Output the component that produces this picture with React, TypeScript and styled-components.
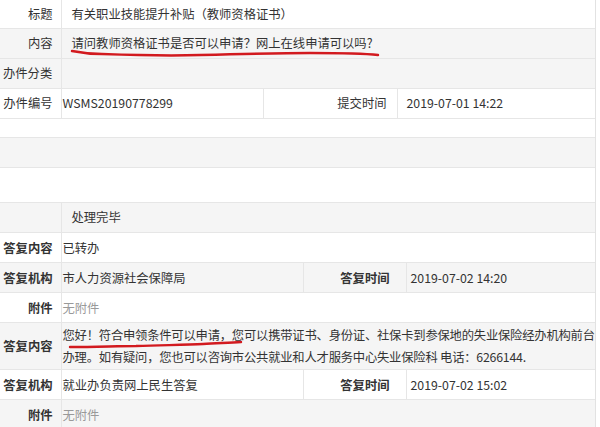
import React from 'react'
import styled, { createGlobalStyle } from 'styled-components'

const GlobalStyle = createGlobalStyle`
  html, body {
    margin: 0;
    padding: 0;
    background: #fff;
  }
  body {
    font-family: "Noto Sans CJK SC", "Liberation Sans", sans-serif;
    font-size: 12.3px;
    color: #333;
  }
`

function App() {
  return (
    <>
      <GlobalStyle />
      <Page>
        <InfoTable>
          <colgroup>
            <col style={{ width: 61 }} />
            <col style={{ width: 202 }} />
            <col style={{ width: 134 }} />
            <col />
          </colgroup>
          <tbody>
            <Row $h={28}>
              <Label>标题</Label>
              <Value colSpan={3} $pad={10}>有关职业技能提升补贴（教师资格证书）</Value>
            </Row>
            <Row $gray>
              <Label>内容</Label>
              <Value colSpan={3} $pad={10}>
                <Marked>
                  请问教师资格证书是否可以申请？网上在线申请可以吗?
                  <Scribble width={312} height={10} viewBox="0 0 312 10">
                    <path d="M2 2 C 12 4, 22 5, 32 5 C 60 6, 100 7, 130 6 C 170 5, 210 4, 240 4 C 270 4, 290 4, 308 6" />
                  </Scribble>
                </Marked>
              </Value>
            </Row>
            <Row $gray>
              <Label $left>办件分类</Label>
              <Value colSpan={3} />
            </Row>
            <Row>
              <Label>办件编号</Label>
              <Value $pad={1}>WSMS20190778299</Value>
              <Label $sep>提交时间</Label>
              <Value $pad={9}>2019-07-01 14:22</Value>
            </Row>
          </tbody>
        </InfoTable>

        <SectionBand />
        <SectionTitle />

        <ReplyTable>
          <colgroup>
            <col style={{ width: 61 }} />
            <col style={{ width: 242 }} />
            <col style={{ width: 103 }} />
            <col />
          </colgroup>
          <tbody>
            <Row $gray>
              <Label />
              <Value colSpan={3} $pad={10}>处理完毕</Value>
            </Row>
            <Row>
              <BoldLabel>答复内容</BoldLabel>
              <Value colSpan={3} $pad={1}>已转办</Value>
            </Row>
            <Row $gray>
              <BoldLabel>答复机构</BoldLabel>
              <Value $pad={1}>市人力资源社会保障局</Value>
              <BoldLabel $sep>答复时间</BoldLabel>
              <Value $pad={4}>2019-07-02 14:20</Value>
            </Row>
            <Row>
              <BoldLabel>附件</BoldLabel>
              <Value colSpan={3} $pad={1} $muted>无附件</Value>
            </Row>
            <Row $gray $h={47}>
              <BoldLabel>答复内容</BoldLabel>
              <Value colSpan={3} $pad={1}>
                <Paragraph>
                  <Marked>
                    您好！符合申领条件可以申请，
                    <Scribble width={178} height={10} viewBox="0 0 178 10" $top={13} $left={4}>
                      <path d="M3 8 C 30 8, 50 7, 69 7 C 100 6, 120 6, 136 5 C 150 4, 162 4, 174 3" />
                    </Scribble>
                  </Marked>
                  您可以携带证书、身份证、社保卡到参保地的失业保险经办机构前台办理。如有疑问，您也可以咨询市公共就业和人才服务中心失业保险科 电话：6266144.
                </Paragraph>
              </Value>
            </Row>
            <Row>
              <BoldLabel>答复机构</BoldLabel>
              <Value $pad={1}>就业办负责网上民生答复</Value>
              <BoldLabel $sep>答复时间</BoldLabel>
              <Value $pad={4}>2019-07-02 15:02</Value>
            </Row>
            <Row $gray>
              <BoldLabel>附件</BoldLabel>
              <Value colSpan={3} $pad={1} $muted>无附件</Value>
            </Row>
          </tbody>
        </ReplyTable>
      </Page>
    </>
  )
}

const Page = styled.div`
  width: 595px;
  border-right: 1px solid #e2e2e2;
  overflow: hidden;
`
const InfoTable = styled.table`
  width: 100%;
  border-collapse: collapse;
  table-layout: fixed;
`
const ReplyTable = styled(InfoTable)``
const Row = styled.tr<{ $gray?: boolean; $h?: number }>`
  height: ${p => p.$h ?? 30}px;
  background: ${p => (p.$gray ? '#f5f5f5' : '#fff')};
  border-bottom: 1px solid #e6e6e6;
`
const Label = styled.td<{ $left?: boolean; $sep?: boolean }>`
  padding: 0 ${p => (p.$sep ? 10 : 8)}px 0 ${p => (p.$left ? 3 : 0)}px;
  text-align: ${p => (p.$left ? 'left' : 'right')};
  white-space: nowrap;
  overflow: visible;
  color: #333;
  border-right: 1px solid #e6e6e6;
  ${p => (p.$sep ? 'border-left: 1px solid #e6e6e6;' : '')}
`
const BoldLabel = styled(Label)`
  font-weight: bold;
  padding-right: ${p => (p.$sep ? 16 : 8)}px;
`
const Value = styled.td<{ $pad?: number; $muted?: boolean }>`
  padding: 0 0 0 ${p => p.$pad ?? 0}px;
  color: ${p => (p.$muted ? '#999' : '#333')};
  white-space: nowrap;
`
const Paragraph = styled.div`
  white-space: normal;
  line-height: 22px;
  letter-spacing: -0.2px;
`
const Marked = styled.span`
  position: relative;
`
const Scribble = styled.svg<{ $top?: number; $left?: number }>`
  position: absolute;
  left: ${p => p.$left ?? -2}px;
  top: ${p => p.$top ?? 15}px;
  overflow: visible;
  fill: none;
  stroke: #d21a1f;
  stroke-width: 2.4;
  stroke-linecap: round;
  pointer-events: none;
`
const SectionBand = styled.div`
  margin-top: 18px;
  height: 29px;
  background: #f5f5f5;
  border-top: 1px solid #e6e6e6;
  border-bottom: 1px solid #e6e6e6;
`
const SectionTitle = styled.div`
  height: 34px;
  background: #fff;
  border-bottom: 1px solid #e6e6e6;
`

export default App
